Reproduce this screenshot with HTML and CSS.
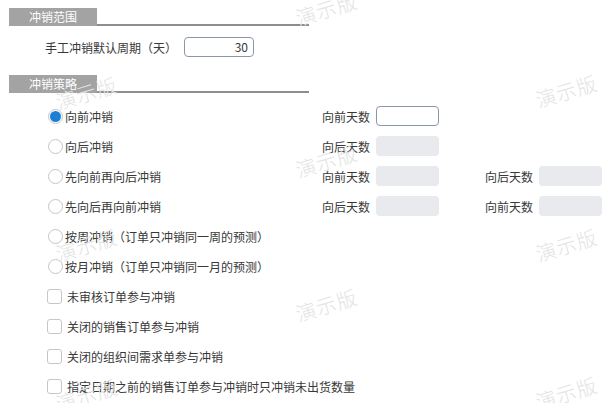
FILE: index.html
```html
<!DOCTYPE html>
<html lang="zh">
<head>
<meta charset="utf-8">
<link rel="stylesheet" href="styles.css">
</head>
<body>
<div class="page">
  <div class="section-title"><span class="tag">冲销范围</span><span class="rule"></span></div>
  <div class="field-row">
    <span class="field-label">手工冲销默认周期（天）</span>
    <span class="box box-active num">30</span>
  </div>
  <div class="section-title second"><span class="tag">冲销策略</span><span class="rule"></span></div>
  <div class="options">
    <div class="row">
      <span class="opt"><span class="radio checked"></span><span class="opt-text">向前冲销</span></span>
      <span class="lbl">向前天数</span><span class="box box-active"></span>
    </div>
    <div class="row">
      <span class="opt"><span class="radio"></span><span class="opt-text">向后冲销</span></span>
      <span class="lbl">向后天数</span><span class="box box-off"></span>
    </div>
    <div class="row">
      <span class="opt"><span class="radio"></span><span class="opt-text">先向前再向后冲销</span></span>
      <span class="lbl">向前天数</span><span class="box box-off"></span>
      <span class="spacer"></span>
      <span class="lbl">向后天数</span><span class="box box-off"></span>
    </div>
    <div class="row">
      <span class="opt"><span class="radio"></span><span class="opt-text">先向后再向前冲销</span></span>
      <span class="lbl">向后天数</span><span class="box box-off"></span>
      <span class="spacer"></span>
      <span class="lbl">向前天数</span><span class="box box-off"></span>
    </div>
    <div class="row">
      <span class="opt"><span class="radio"></span><span class="opt-text">按周冲销（订单只冲销同一周的预测）</span></span>
    </div>
    <div class="row">
      <span class="opt"><span class="radio"></span><span class="opt-text">按月冲销（订单只冲销同一月的预测）</span></span>
    </div>
    <div class="row">
      <span class="opt"><span class="check"></span><span class="chk-text">未审核订单参与冲销</span></span>
    </div>
    <div class="row">
      <span class="opt"><span class="check"></span><span class="chk-text">关闭的销售订单参与冲销</span></span>
    </div>
    <div class="row">
      <span class="opt"><span class="check"></span><span class="chk-text">关闭的组织间需求单参与冲销</span></span>
    </div>
    <div class="row">
      <span class="opt wide"><span class="check"></span><span class="chk-text">指定日期之前的销售订单参与冲销时只冲销未出货数量</span></span>
    </div>
  </div>
</div>
<div class="wm" style="left:292px;top:4px">演示版</div>
<div class="wm" style="left:52px;top:88px">演示版</div>
<div class="wm" style="left:532px;top:86px">演示版</div>
<div class="wm" style="left:292px;top:156px">演示版</div>
<div class="wm" style="left:52px;top:240px">演示版</div>
<div class="wm" style="left:532px;top:240px">演示版</div>
<div class="wm" style="left:292px;top:300px">演示版</div>
<div class="wm" style="left:52px;top:390px">演示版</div>
<div class="wm" style="left:532px;top:388px">演示版</div>
</body>
</html>
```

FILE: styles.css
```css
html, body {
  margin: 0;
  padding: 0;
  background: #fff;
  overflow: hidden;
}
body {
  position: relative;
  width: 616px;
  height: 403px;
  font-family: "Noto Sans CJK SC", "Noto Sans", sans-serif;
  font-size: 12px;
  color: #383838;
}
.page {
  padding-top: 8px;
}
.section-title {
  display: flex;
  align-items: flex-end;
  margin-left: 9px;
  width: 300px;
  height: 18px;
}
.section-title.second {
  margin-top: 18px;
}
.tag {
  box-sizing: border-box;
  width: 88px;
  height: 18px;
  background: #a3a3a3;
  color: #fff;
  line-height: 17px;
  padding-left: 20px;
}
.rule {
  flex: 1;
  height: 2px;
  background: #8e8e8e;
}
.field-row {
  display: flex;
  align-items: center;
  margin-top: 11px;
  padding-left: 45px;
  height: 20px;
}
.field-label {
  width: 139px;
}
.box {
  box-sizing: border-box;
  display: block;
  height: 20px;
  width: 63px;
  border-radius: 4px;
  line-height: 18px;
}
.box-active {
  border: 1px solid #8c96ab;
  background: #fff;
}
.box-off {
  background: #e8eaee;
}
.num {
  width: 70px;
  text-align: right;
  padding-right: 5px;
}
.options {
  margin-top: 8px;
}
.row {
  display: flex;
  align-items: center;
  height: 30px;
  padding-left: 47px;
}
.opt {
  display: flex;
  align-items: center;
  width: 275px;
  white-space: nowrap;
}
.opt.wide {
  width: 400px;
}
.radio {
  box-sizing: border-box;
  position: relative;
  width: 15px;
  height: 15px;
  margin-left: 1px;
  border: 1px solid #c6c6c6;
  border-radius: 50%;
  background: #fff;
  flex: none;
}
.radio.checked::after {
  content: "";
  position: absolute;
  left: 1px;
  top: 1px;
  width: 11px;
  height: 11px;
  border-radius: 50%;
  background: #1b7fd6;
}
.opt-text {
  margin-left: 2px;
}
.check {
  box-sizing: border-box;
  width: 15px;
  height: 15px;
  border: 1px solid #c6c6c6;
  border-radius: 3px;
  background: #fff;
  flex: none;
}
.chk-text {
  margin-left: 5px;
}
.lbl {
  width: 54px;
  white-space: nowrap;
}
.spacer {
  width: 46px;
}
.wm {
  position: absolute;
  font-size: 20px;
  font-weight: 300;
  color: #e3e3e3;
  transform: rotate(-17deg);
  transform-origin: left top;
  pointer-events: none;
  white-space: nowrap;
  letter-spacing: 1px;
}
```
